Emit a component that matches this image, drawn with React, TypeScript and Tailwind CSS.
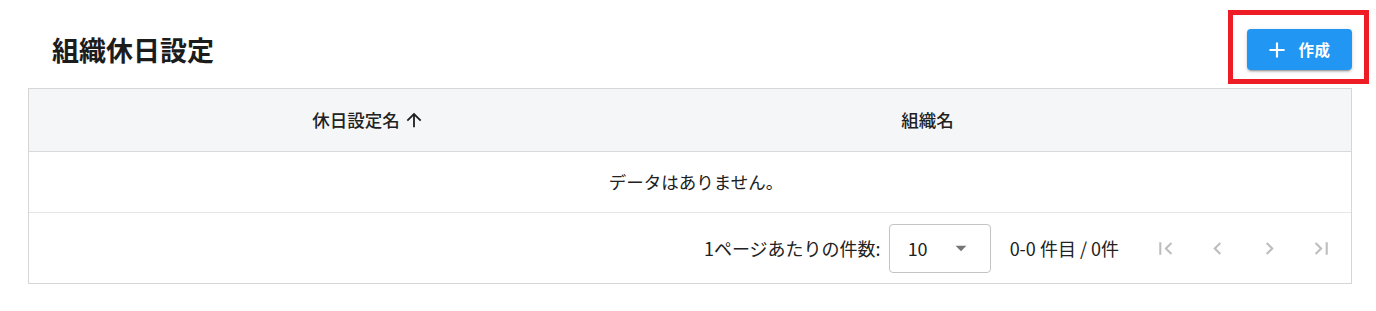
import React from "react";

function Icon({ d, className }: { d: string; className?: string }) {
  return (
    <svg viewBox="0 0 24 24" className={className} fill="currentColor" aria-hidden="true">
      <path d={d} />
    </svg>
  );
}

const P = {
  add: "M19 13h-6v6h-2v-6H5v-2h6V5h2v6h6v2z",
  up: "M4 12l1.41 1.41L11 7.83V20h2V7.83l5.58 5.59L20 12l-8-8-8 8z",
  drop: "M7 10l5 5 5-5z",
  first: "M18.41 16.59L13.82 12l4.59-4.59L17 6l-6 6 6 6zM6 6h2v12H6z",
  prev: "M15.41 16.59L10.83 12l4.58-4.59L14 6l-6 6 6 6 1.41-1.41z",
  next: "M8.59 16.59L13.17 12 8.59 7.41 10 6l6 6-6 6-1.41-1.41z",
  last: "M5.59 7.41L10.18 12l-4.59 4.59L7 18l6-6-6-6zM16 6h2v12h-2z",
};

export default function App() {
  return (
    <div className="w-[1376px] h-[311px] bg-white font-['Noto_Sans_CJK_JP','Noto_Sans',sans-serif] text-[#212121]">
      <div className="pl-[28px] pr-[24px] pt-[29px]">
        <div className="flex items-center justify-between h-[41px]">
          <h1 className="pl-[24px] text-[27px] font-bold leading-none text-[#1c1c1c]">組織休日設定</h1>
          <div className="relative">
            <button className="flex items-center justify-center gap-[8px] w-[105px] h-[41px] rounded-[4px] bg-[#2196f3] text-white text-[15.5px] font-bold tracking-[0.5px] shadow-[0_3px_1px_-2px_rgba(0,0,0,0.2),0_2px_2px_0_rgba(0,0,0,0.14),0_1px_5px_0_rgba(0,0,0,0.12)]">
              <Icon d={P.add} className="w-[26px] h-[26px] -ml-[4px]" />
              <span>作成</span>
            </button>
            <div className="absolute left-[-19px] top-[-19px] w-[141px] h-[74px] border-[5px] border-[#ee1c25] pointer-events-none" />
          </div>
        </div>

        <div className="mt-[18px] border border-[#d6d6d6]">
          <div className="grid grid-cols-[679px_439px_1fr] h-[63px] bg-[#f5f6f8] border-b border-[#dadada] text-[17.5px] font-medium">
            <div className="flex items-center justify-center">
              <span>休日設定名</span>
              <Icon d={P.up} className="w-[22px] h-[22px] ml-[3px] text-[#212121]" />
            </div>
            <div className="flex items-center justify-center">組織名</div>
            <div />
          </div>
          <div className="flex items-center justify-center h-[61px] border-b border-[#e6e6e6] text-[17.5px] pl-[12px]">
            データはありません。
          </div>
          <div className="flex items-center justify-end h-[70px] text-[18px] pr-[4px]">
            <span>1ページあたりの件数:</span>
            <div className="ml-[8px] flex items-center justify-between w-[102px] h-[49px] rounded-[4px] border border-[#c4c4c4] pl-[18px] pr-[16px]">
              <span className="text-[18px]">10</span>
              <Icon d={P.drop} className="w-[26px] h-[26px] text-[#757575]" />
            </div>
            <span className="ml-[19px]">0-0 件目 / 0件</span>
            <div className="ml-[20px] flex items-center text-[#bdbdbd]">
              {[P.first, P.prev, P.next, P.last].map((d, i) => (
                <div key={i} className="w-[52px] h-[52px] flex items-center justify-center">
                  <Icon d={d} className="w-[25px] h-[25px]" />
                </div>
              ))}
            </div>
          </div>
        </div>
      </div>
    </div>
  );
}
